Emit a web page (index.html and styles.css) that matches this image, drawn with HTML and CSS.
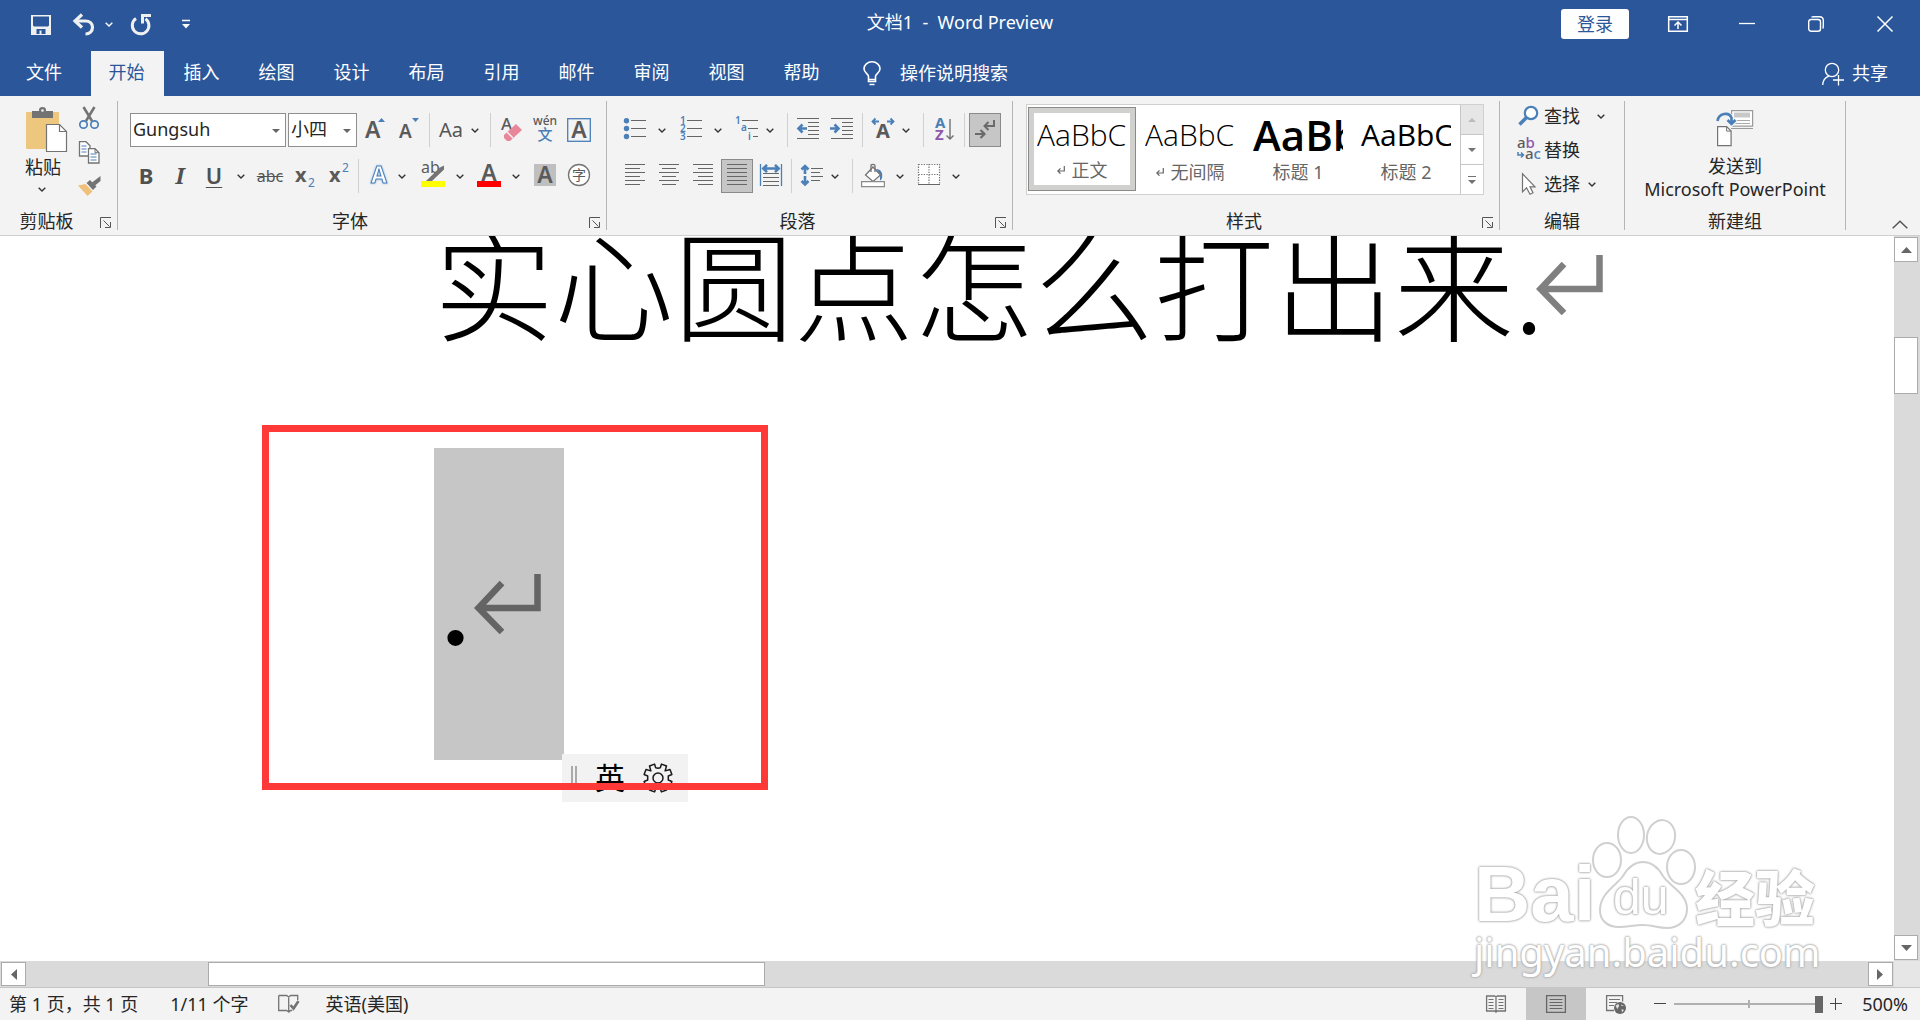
FILE: index.html
```html
<!DOCTYPE html>
<html lang="zh-CN">
<head>
<meta charset="utf-8">
<meta name="viewport" content="width=device-width, initial-scale=1">
<title>文档1 - Word Preview</title>
<link rel="stylesheet" href="styles.css">
</head>
<body>
<svg class="sprites" aria-hidden="true">
  <symbol id="chev" viewBox="0 0 8 5"><path d="M.7 .7 4 4 7.3 .7" fill="none" stroke="currentColor" stroke-width="1.4"/></symbol>
  <symbol id="tri" viewBox="0 0 8 4"><path d="M0 0h8L4 4z" fill="currentColor"/></symbol>
  <symbol id="launch" viewBox="0 0 12 12"><path d="M.5 11V.5H11M3.5 3.5 9.500 9.500M10.500 5v5.500H5" fill="none" stroke="#555"/></symbol>
  <symbol id="ret" viewBox="0 0 68 60"><path d="M63.500 0v34H5M28 9 4.500 34 28 58" fill="none" stroke="currentColor" stroke-width="6.500"/></symbol>
  <symbol id="smallret" viewBox="0 0 8 8"><path d="M7.300 0v5H1M3.500 2.300.8 5l2.700 2.700" fill="none" stroke="currentColor" stroke-width="1.200"/></symbol>
</svg>

<header class="titlebar">
  <div class="quick">
    <button class="q save" aria-label="保存"><svg width="20" height="20"><path d="M0 0h20v20H0z" fill="#f0f0f0"/><path d="M2 1.500h16v9l-1 1H3l-1-1zM5.500 14h9v5h-4v-3.500h-2V19h-3z" fill="#2b579a"/></svg></button>
    <button class="q undo" aria-label="撤销"><svg width="24" height="22"><path d="M3 7h10.500c4 0 7 2.500 7 6.300 0 4-3 6.700-7 6.700" fill="none" stroke="#f0f0f0" stroke-width="3.200"/><path d="M10 .5 3 7l7 6.500" fill="none" stroke="#f0f0f0" stroke-width="3.200"/></svg><svg width="8" height="5"><use href="#chev"/></svg></button>
    <button class="q redo" aria-label="重复"><svg width="22" height="22"><path d="M15.500 4.800A8.300 8.300 0 1 1 6 4.600" fill="none" stroke="#f0f0f0" stroke-width="3"/><path d="M12.500 9.500V1.500H21" fill="none" stroke="#f0f0f0" stroke-width="3"/></svg></button>
    <button class="q" aria-label="自定义快速访问工具栏"><svg width="8" height="9"><path d="M0 .5h8" stroke="#fff" stroke-width="1.500"/><path d="M0 4h8L4 8.500z" fill="#fff"/></svg></button>
  </div>
  <h1 class="doc-title">文档1 &nbsp;-&nbsp; Word Preview</h1>
  <div class="window">
    <button class="login">登录</button>
    <button class="win" aria-label="功能区显示选项"><svg width="20" height="16"><path d="M.7.7h18.600v14.600H.7zM0 3.500h20M10 13V6M6.500 9.500 10 6l3.500 3.500" fill="none" stroke="#fff" stroke-width="1.500"/></svg></button>
    <button class="win" aria-label="最小化"><svg width="16" height="16"><path d="M0 7.500h16" stroke="#fff" stroke-width="1.300"/></svg></button>
    <button class="win" aria-label="还原"><svg width="16" height="16"><rect x=".7" y="3.500" width="11.800" height="11.800" rx="2.500" fill="none" stroke="#fff" stroke-width="1.400"/><path d="M3.500 1.200C4 .8 5 .7 6 .7h5.500c2.500 0 3.800 1.300 3.800 3.800V10c0 1.200-.2 2-.6 2.500" fill="none" stroke="#fff" stroke-width="1.400"/></svg></button>
    <button class="win" aria-label="关闭"><svg width="16" height="16"><path d="M.5.5l15 15M15.500.5l-15 15" stroke="#fff" stroke-width="1.500"/></svg></button>
  </div>
</header>

<nav class="tabs">
  <a class="tab file" href="#">文件</a>
  <a class="tab active" href="#">开始</a>
  <a class="tab" href="#">插入</a>
  <a class="tab" href="#">绘图</a>
  <a class="tab" href="#">设计</a>
  <a class="tab" href="#">布局</a>
  <a class="tab" href="#">引用</a>
  <a class="tab" href="#">邮件</a>
  <a class="tab" href="#">审阅</a>
  <a class="tab" href="#">视图</a>
  <a class="tab" href="#">帮助</a>
  <button class="tellme"><svg width="18" height="25"><path d="M5.500 18.500v-3C5.500 13 1 12 1 7.800a8 7 0 0 1 16 0c0 4.200-4.500 5.200-4.500 7.700v3zM5.500 18.500v2h7v-2M6.500 23.500h5" fill="none" stroke="#fff" stroke-width="1.600"/></svg>操作说明搜索</button>
  <button class="share"><svg width="22" height="24"><circle cx="10" cy="8" r="6.700" fill="none" stroke="#fff" stroke-width="1.300"/><path d="M.7 23C1 18 3.500 15.300 7 14.200M16.500 13v10.500M11 18h11" fill="none" stroke="#fff" stroke-width="1.300"/></svg>共享</button>
</nav>

<section class="ribbon">
  <div class="group g-clip">
    <div class="body clip">
      <button class="paste">
        <svg width="42" height="46"><rect y="5" width="33" height="37" rx="1" fill="#eec77e"/><path d="M6 4h7V3a3.500 3 0 0 1 7 0v1h7v7H6z" fill="#737373"/><circle cx="16.500" cy="3.500" r="1.300" fill="#f3f3f3"/><path d="M20.500 17.500h13l7 7v20h-20z" fill="#fff" stroke="#737373" stroke-width="1.200"/><path d="M33.500 17.500v7h7" fill="none" stroke="#737373" stroke-width="1.200"/></svg>
        <span>粘贴</span>
        <svg class="c" width="8" height="5"><use href="#chev"/></svg>
      </button>
      <div class="clip-side">
        <button aria-label="剪切"><svg width="22" height="22"><path d="M5.500 0 14 14M16.500 0 8 14" stroke="#737373" stroke-width="2.500"/><circle cx="5.500" cy="17.500" r="3.700" fill="none" stroke="#4a7fb8" stroke-width="1.700"/><circle cx="16.500" cy="17.500" r="3.700" fill="none" stroke="#4a7fb8" stroke-width="1.700"/></svg></button>
        <button aria-label="复制"><svg width="22" height="23"><path d="M1.500.7h6.500l4 4V15H1.500z" fill="#fff" stroke="#737373" stroke-width="1.300"/><path d="M3.500 5h5M3.500 8h5M3.500 11h5" stroke="#4a7fb8"/><path d="M10.500 7.700H17l4 4V22H10.500z" fill="#fff" stroke="#737373" stroke-width="1.300"/><path d="M17 7.700v4h4" fill="none" stroke="#737373"/><path d="M12.500 13h6M12.500 16h6M12.500 19h6" stroke="#4a7fb8"/></svg></button>
        <button aria-label="格式刷"><svg width="23" height="20"><path d="M0 9.500 7.500 8l7 7.500-5 4.500z" fill="#eec07a"/><path d="M8.500 7 12 4l6.500 6.500-3.500 3.500z" fill="#737373"/><path d="M14 6.500 22.500 0v5L17 9.500z" fill="#737373"/></svg></button>
      </div>
    </div>
    <div class="foot"><span>剪贴板</span><button aria-label="剪贴板设置"><svg width="12" height="12"><use href="#launch"/></svg></button></div>
  </div>
  <i class="divider"></i>

  <div class="group g-font">
    <div class="body">
      <div class="row">
        <span class="combo wide"><select aria-label="字体"><option>Gungsuh</option></select><svg width="8" height="4"><use href="#tri"/></svg></span>
        <span class="combo"><select aria-label="字号"><option>小四</option></select><svg width="8" height="4"><use href="#tri"/></svg></span>
        <button class="t" aria-label="增大字号"><svg width="24" height="24"><text x="2" y="20" class="l24">A</text><path d="M15 4h7l-3.500-4z" fill="#4a7fb8"/></svg></button>
        <button class="t" aria-label="减小字号"><svg width="24" height="24"><text x="2" y="20" class="l20">A</text><path d="M15 0h7l-3.500 4z" fill="#4a7fb8"/></svg></button>
        <i class="sep"></i>
        <button class="t tight" aria-label="更改大小写"><span class="aa">Aa</span><svg class="c" width="8" height="5"><use href="#chev"/></svg></button>
        <i class="sep"></i>
        <button class="t" aria-label="清除格式"><svg width="24" height="24"><text x="2" y="12" class="l18">A</text><path d="M5 17 17 6l6 6-12 11H8l-3-3z" fill="#e8879a"/><path d="m8 14 6 6" stroke="#f3f3f3" stroke-width="1.500"/></svg></button>
        <button class="t" aria-label="拼音指南"><svg width="24" height="24"><text x="12" y="7" text-anchor="middle" class="l12">wén</text><text x="12" y="22" text-anchor="middle" class="l14">文</text></svg></button>
        <button class="t" aria-label="字符边框"><svg width="24" height="24"><rect x=".7" y=".7" width="22.600" height="22.600" fill="none" stroke="#4a7fb8" stroke-width="1.300"/><text x="12" y="20" text-anchor="middle" class="l22">A</text></svg></button>
      </div>
      <div class="row">
        <button class="t ch b" aria-label="加粗">B</button>
        <button class="t ch i" aria-label="倾斜">I</button>
        <button class="t split" aria-label="下划线"><span class="ch u">U</span><svg class="c" width="8" height="5"><use href="#chev"/></svg></button>
        <button class="t" aria-label="删除线"><s class="strike">abc</s></button>
        <button class="t" aria-label="下标"><svg width="24" height="24"><text x="3" y="18" class="x">x</text><text x="16" y="23" class="n">2</text></svg></button>
        <button class="t" aria-label="上标"><svg width="24" height="24"><text x="3" y="18" class="x">x</text><text x="16" y="8" class="n">2</text></svg></button>
        <i class="sep"></i>
        <button class="t tight" aria-label="文本效果"><svg width="24" height="24"><text x="12" y="19" text-anchor="middle" class="outline">A</text></svg><svg class="c" width="8" height="5"><use href="#chev"/></svg></button>
        <button class="t split" aria-label="突出显示"><svg width="24" height="24"><text x="0" y="9" class="l16">ab</text><path d="M5 17 19 3.500 23 1.500v4L11 17z" fill="#737373"/><path d="M0 17h24v6H0z" fill="#ff0"/></svg><svg class="c" width="8" height="5"><use href="#chev"/></svg></button>
        <button class="t split" aria-label="字体颜色"><svg width="24" height="24"><text x="12" y="17" text-anchor="middle" class="l22">A</text><path d="M0 17h24v6H0z" fill="#f00"/></svg><svg class="c" width="8" height="5"><use href="#chev"/></svg></button>
        <button class="t" aria-label="字符底纹"><svg width="24" height="24"><path d="M1 0h22v22H1z" fill="#bfbfbf"/><text x="12" y="19" text-anchor="middle" class="l22">A</text></svg></button>
        <button class="t" aria-label="带圈字符"><svg width="24" height="24"><circle cx="12" cy="11" r="10.500" fill="#fff" stroke="#737373" stroke-width="1.300"/><text x="12" y="16" text-anchor="middle" class="zi">字</text></svg></button>
      </div>
    </div>
    <div class="foot"><span>字体</span><button aria-label="字体设置"><svg width="12" height="12"><use href="#launch"/></svg></button></div>
  </div>
  <i class="divider"></i>

  <div class="group g-para">
    <div class="body">
      <div class="row">
        <button class="t split" aria-label="项目符号"><svg width="24" height="24"><g fill="#4a7fb8"><circle cx="3.500" cy="2.700" r="2.700"/><circle cx="3.500" cy="10.500" r="2.700"/><circle cx="3.500" cy="18.500" r="2.700"/></g><path class="ln" d="M8 2.500h15M8 10.500h15M8 18.500h15"/></svg><svg class="c" width="8" height="5"><use href="#chev"/></svg></button>
        <button class="t split" aria-label="编号"><svg width="24" height="24"><text x="1" y="6" class="n9">1</text><text x="1" y="14" class="n9">2</text><text x="1" y="22" class="n9">3</text><path class="ln" d="M8 2.500h15M8 10.500h15M8 18.500h15"/></svg><svg class="c" width="8" height="5"><use href="#chev"/></svg></button>
        <button class="t tight" aria-label="多级列表"><svg width="24" height="24"><text x="0" y="6" class="n9">1</text><text x="6" y="13" class="n9">a</text><text x="13" y="22" class="n9">i</text><path class="ln" d="M7 2.500h16M13 10.500h10M18 18.500h5"/></svg><svg class="c" width="8" height="5"><use href="#chev"/></svg></button>
        <i class="sep"></i>
        <button class="t" aria-label="减少缩进量"><svg width="24" height="24"><path class="ln" d="M1 .5h22M12 4.500h11M12 8.500h11M12 12.500h11M12 16.500h11M1 20.500h22"/><path d="M11 10.500H3M6.500 6.500l-4 4 4 4" class="ar"/></svg></button>
        <button class="t" aria-label="增加缩进量"><svg width="24" height="24"><path class="ln" d="M1 .5h22M12 4.500h11M12 8.500h11M12 12.500h11M12 16.500h11M1 20.500h22"/><path d="M0 10.500h8M4.500 6.500l4 4-4 4" class="ar"/></svg></button>
        <i class="sep"></i>
        <button class="t tight" aria-label="中文版式"><svg width="24" height="24"><text x="12" y="20" text-anchor="middle" class="l18 w">A</text><path d="M8 3.500H2M4.500.5l-3 3 3 3M16 3.500h6M19.500.5l3 3-3 3" fill="none" stroke="#4a7fb8" stroke-width="1.800"/></svg><svg class="c" width="8" height="5"><use href="#chev"/></svg></button>
        <i class="sep"></i>
        <button class="t" aria-label="排序"><svg width="24" height="24"><text x="3" y="10" class="az">A</text><text x="3" y="22" class="az z">Z</text><path d="M18 1v20M14.500 17.500 18 21l3.500-3.500" fill="none" stroke="#737373" stroke-width="1.400"/></svg></button>
        <i class="sep"></i>
        <button class="t on" aria-label="显示编辑标记" aria-pressed="true"><svg width="24" height="24"><path d="M21 2v6h-9M15.500 4 11.500 8l4 4" fill="none" stroke="#6a6a6a" stroke-width="2"/><path d="M2 16h9M7.500 12l4 4-4 4" fill="none" stroke="#6a6a6a" stroke-width="2.200"/></svg></button>
      </div>
      <div class="row">
        <button class="t" aria-label="左对齐"><svg width="24" height="24"><path class="ln" d="M2 .5h20M2 4.500h15M2 8.500h20M2 12.500h15M2 16.500h20M2 20.500h15"/></svg></button>
        <button class="t" aria-label="居中"><svg width="24" height="24"><path class="ln" d="M2 .5h20M5 4.500h14M2 8.500h20M5 12.500h14M2 16.500h20M5 20.500h14"/></svg></button>
        <button class="t" aria-label="右对齐"><svg width="24" height="24"><path class="ln" d="M2 .5h20M7 4.500h15M2 8.500h20M7 12.500h15M2 16.500h20M7 20.500h15"/></svg></button>
        <button class="t on" aria-label="两端对齐" aria-pressed="true"><svg width="24" height="24"><path class="ln" d="M2 .5h20M2 4.500h20M2 8.500h20M2 12.500h20M2 16.500h20M2 20.500h20"/></svg></button>
        <button class="t" aria-label="分散对齐"><svg width="24" height="24"><path d="M1.500 0v22M22.500 0v22" stroke="#4a7fb8" stroke-width="1.300"/><path d="M5 4.500h14M8 .8 4.300 4.500 8 8.200M16 .8l3.700 3.700L16 8.200" class="ar"/><path class="ln" d="M4 9.500h16M4 13.500h16M4 17.500h16M4 21.500h16"/></svg></button>
        <i class="sep"></i>
        <button class="t tight" aria-label="行距"><svg width="24" height="24"><path d="M5 2v18M1.500 5.500 5 2l3.500 3.500M1.500 17 5 20.500 8.500 17" class="ar"/><path d="M3 11h4" stroke="#f3f3f3" stroke-width="2"/><path class="ln" d="M11 4.500h12M11 8.500h9M11 12.500h12M11 16.500h9"/></svg><svg class="c" width="8" height="5"><use href="#chev"/></svg></button>
        <i class="sep"></i>
        <button class="t split" aria-label="底纹"><svg width="24" height="24"><path d="M15 5c5 0 7 4 6 9-.3 1.500-1.500 2.500-2 2.500V10z" fill="#4a7fb8"/><path d="m12 3 7.500 8-7.500 6.500L4.500 11z" fill="#fff" stroke="#737373" stroke-width="1.300"/><path d="M10 8V1.500C10 0 14 0 14 1.500V8" fill="none" stroke="#737373" stroke-width="1.300"/><path d="M.6 17.600h22.800v5H.6z" fill="#fff" stroke="#8a8a8a" stroke-width="1.200"/></svg><svg class="c" width="8" height="5"><use href="#chev"/></svg></button>
        <button class="t split" aria-label="边框"><svg width="24" height="24"><path d="M1 0h22v20H1z" fill="#fff"/><path d="M1.500.5h21M1.500 10.500h21M1.500 0v20M12 0v20M22.500 0v20" stroke="#737373" stroke-width="1.200" stroke-dasharray="1.300 1.300"/><path class="ln" d="M1 20.500h22"/></svg><svg class="c" width="8" height="5"><use href="#chev"/></svg></button>
      </div>
    </div>
    <div class="foot"><span>段落</span><button aria-label="段落设置"><svg width="12" height="12"><use href="#launch"/></svg></button></div>
  </div>
  <i class="divider"></i>

  <div class="group g-style">
    <div class="body styles">
      <div class="gallery">
        <button class="style sel"><span class="sample light">AaBbC</span><span class="name"><svg width="8" height="8"><use href="#smallret"/></svg>正文</span></button>
        <button class="style"><span class="sample light">AaBbC</span><span class="name"><svg width="8" height="8"><use href="#smallret"/></svg>无间隔</span></button>
        <button class="style"><span class="sample big">AaBb</span><span class="name">标题 1</span></button>
        <button class="style"><span class="sample">AaBbC</span><span class="name">标题 2</span></button>
        <div class="scrollers">
          <button class="off" aria-label="上一行"><svg width="8" height="4"><path d="M0 4h8L4 0z" fill="#bbb"/></svg></button>
          <button aria-label="下一行"><svg width="8" height="4"><use href="#tri"/></svg></button>
          <button aria-label="其他样式"><svg width="8" height="8"><path d="M0 .5h8" stroke="#737373"/><path d="M0 4h8L4 8z" fill="#737373"/></svg></button>
        </div>
      </div>
    </div>
    <div class="foot"><span>样式</span><button aria-label="样式设置"><svg width="12" height="12"><use href="#launch"/></svg></button></div>
  </div>
  <i class="divider"></i>

  <div class="group g-edit">
    <div class="body edit">
      <button class="cmd"><svg width="24" height="22"><circle cx="14" cy="8" r="6.200" fill="#fff" stroke="#4a7fb8" stroke-width="2.200"/><path d="m9.500 12.500-7 7" stroke="#4a7fb8" stroke-width="3.500"/></svg>查找<svg class="c far" width="8" height="5"><use href="#chev"/></svg></button>
      <button class="cmd"><svg width="24" height="22"><text x="0" y="9" class="rp">a<tspan fill="#8e57ab">b</tspan></text><text x="8" y="20" class="rp">a<tspan fill="#4a7fb8">c</tspan></text><path d="M1 13v3h5M4 13.500l2.500 2.500L4 18.500" fill="none" stroke="#4a7fb8" stroke-width="1.500"/></svg>替换</button>
      <button class="cmd"><svg width="24" height="22"><path d="M5.500.8v18l4-4 3.500 6.500 3-1.500-3-6h5z" fill="#fff" stroke="#737373" stroke-width="1.200"/></svg>选择<svg class="c" width="8" height="5"><use href="#chev"/></svg></button>
    </div>
    <div class="foot"><span>编辑</span></div>
  </div>
  <i class="divider"></i>

  <div class="group g-new">
    <div class="body">
      <button class="send"><svg width="38" height="38"><path d="M15.600 1.600h21v15.500h-21z" fill="#fff" stroke="#9a9a9a" stroke-width="1.200"/><path d="M18 3.500h16v5H18z" fill="#c8c8c8"/><path d="M18 11.500h16M18 14.500h16" stroke="#aaa"/><path d="M15 19.500h22" stroke="#9a9a9a"/><path d="M1.500 13C2.500 6 11 1.500 15.500 9v6M11 10.500l4.500 4.500 4.500-4.500" fill="none" stroke="#f3f3f3" stroke-width="5"/><path d="M1.500 12C2.500 4.500 13 2 15.500 9v6M11.500 11l4 4 4-4" fill="none" stroke="#4a7fb8" stroke-width="2.600"/><path d="M1.600 17.600h9l4.500 4.500v14.500H1.600z" fill="#fff" stroke="#737373" stroke-width="1.200"/><path d="M10.600 17.600v4.500h4.500" fill="none" stroke="#737373"/></svg><span>发送到</span><span>Microsoft PowerPoint</span></button>
    </div>
    <div class="foot"><span>新建组</span></div>
  </div>
  <i class="divider"></i>
  <button class="collapse" aria-label="折叠功能区"><svg width="16" height="9"><path d="m.7 8.300 7.300-7 7.300 7" fill="none" stroke="#555" stroke-width="1.500"/></svg></button>
</section>

<main class="workspace">
  <article class="page">
    <p class="line">实心圆点怎么打出来.<svg class="mark" width="68" height="60"><use href="#ret"/></svg></p>
    <p class="selected"><span class="dot">•</span><svg class="mark" width="68" height="60"><use href="#ret"/></svg></p>
    <div class="ime"><i class="grip"></i><span>英</span><svg width="30" height="30" viewBox="-15 -15 30 30"><g fill="none" stroke="#1a1a1a" stroke-width="1.500"><circle r="5"/><path d="M-3.500-13.900-2.300-10.300 0-9.800 2.300-10.300 3.500-13.900 8.500-12 7.100-7.100 12-8.500 13.900-3.500 10.300-2 10.300 2 13.900 3.500 12 8.500 7.100 7.100 8.500 12 3.500 13.900 2 10.300-2 10.300-3.500 13.900-8.500 12-7.100 7.100-12 8.500-13.900 3.500-10.300 2-10.300-2-13.900-3.500-12-8.500-7.100-7.100-8.500-12z" stroke-linejoin="round"/></g></svg></div>
    <div class="highlight"></div>
  </article>
  <div class="vscroll">
    <button aria-label="向上滚动"><svg width="11" height="6"><path d="M0 6h11L5.500 0z" fill="#666"/></svg></button>
    <i class="before"></i><i class="thumb"></i><i class="after"></i>
    <button aria-label="向下滚动"><svg width="11" height="6"><path d="M0 0h11L5.500 6z" fill="#666"/></svg></button>
  </div>
</main>

<div class="hscroll">
  <button aria-label="向左滚动"><svg width="6" height="11"><path d="M6 0v11L0 5.500z" fill="#666"/></svg></button>
  <i class="before"></i><i class="thumb"></i><i class="after"></i>
  <button aria-label="向右滚动"><svg width="6" height="11"><path d="M0 0v11l6-5.500z" fill="#666"/></svg></button>
  <i class="corner"></i>
</div>

<footer class="status">
  <span class="pages">第 1 页，共 1 页</span>
  <span class="words">1/11 个字</span>
  <svg class="proof" width="22" height="20"><path d="M.7 1.500h8l2 1.500 2-1.500h7V6M.7 1.500v15h8l2 1.500V3M10.700 18l2-1.500h1.500" fill="none" stroke="#737373" stroke-width="1.300"/><path d="m12.500 11 3 3.500L20.500 7" fill="none" stroke="#737373" stroke-width="2.600"/></svg>
  <span>英语(美国)</span>
  <div class="views">
    <button aria-label="阅读视图"><svg width="20" height="18"><path d="M.6 1h8l1.400 1 1.400-1h8v15h-8L10 17l-1.400-1h-8zM10 2v16" fill="none" stroke="#737373" stroke-width="1.300"/><path d="M2.500 4.500h5M2.500 7.500h5M2.500 10.500h5M2.500 13.500h5M12.500 4.500h5M12.500 7.500h5M12.500 10.500h5M12.500 13.500h5" stroke="#737373"/></svg></button>
    <button class="cur" aria-label="页面视图"><svg width="20" height="18"><path d="M.6.6h18.800v16.800H.6z" fill="none" stroke="#666" stroke-width="1.300"/><path d="M3.500 4.500h13M3.500 7.500h13M3.500 10.500h13M3.500 13.500h13" stroke="#666"/></svg></button>
    <button aria-label="Web 版式视图"><svg width="20" height="19"><path d="M8 15.500H.6V.6h16v6" fill="none" stroke="#737373" stroke-width="1.300"/><path d="M3 4.500h11M3 7.500h8M3 10.500h5" stroke="#737373"/><circle cx="14" cy="13" r="6" fill="#666"/><path d="M9.500 11c2-2.500 4-2 3.500 0s-2 2-1 4M15 9.500c0 2 2 1.500 4 2M15.500 14l2.500 1-2 2.500z" fill="#ddd"/></svg></button>
  </div>
  <button class="zoom" aria-label="缩小"><svg width="12" height="12"><path d="M0 5.500h12" stroke="#444"/></svg></button>
  <input class="slider" type="range" min="10" max="500" value="500" aria-label="显示比例">
  <button class="zoom" aria-label="放大"><svg width="12" height="12"><path d="M0 5.500h12M5.500 0v12" stroke="#444"/></svg></button>
  <span class="pct">500%</span>
</footer>

<div class="watermark">
  <div class="wm-top">
    <span class="bai">Bai</span>
    <span class="paw"><svg width="104" height="116" viewBox="0 0 104 116"><g fill="#fff" stroke="#d0d0d0" stroke-width="2"><ellipse cx="16" cy="46" rx="14" ry="17"/><ellipse cx="40" cy="21" rx="13" ry="18"/><ellipse cx="70" cy="23" rx="14" ry="17" transform="rotate(12 70 23)"/><ellipse cx="90" cy="53" rx="14" ry="17"/><path d="M52 48c-10 0-16 7-20 14-6 9-23 17-23 34 0 11 8 17 19 17 9 0 15-2 24-2s15 3 24 3c11 0 20-7 20-19 0-16-17-22-24-33-4-7-10-14-20-14z"/></g></svg><span class="du">du</span></span>
    <span class="jy">经验</span>
  </div>
  <div class="url">jingyan.baidu.com</div>
</div>
</body>
</html>
```
FILE: styles.css
```css
* { box-sizing: border-box; }

body {
  margin: 0;
  min-height: 100vh;
  display: flex;
  flex-direction: column;
  position: relative;
  overflow: hidden;
  font: 18px/24px "Noto Sans", "Noto Sans CJK SC", sans-serif;
  color: #262626;
  background: #fff;
}

button, select, input { font: inherit; color: inherit; margin: 0; }
button { border: 0; padding: 0; background: none; white-space: nowrap; }
a { color: inherit; text-decoration: none; }
svg { display: block; flex: none; overflow: visible; }
.sprites { position: absolute; width: 0; height: 0; }

/* Title bar */
.titlebar {
  height: 51px;
  display: grid;
  grid-template-columns: 1fr auto 1fr;
  padding-bottom: 4px;
  color: #fff;
  background: #2b579a;
}
.doc-title { margin: 0; font-size: 18px; font-weight: 400; line-height: 45px; }
.quick { display: flex; align-items: center; padding: 2px 0 0 31px; }
.q { display: flex; align-items: center; gap: 9px; }
.save { margin-right: 21px; }
.undo { margin-right: 17px; }
.redo { margin-right: 30px; }
.window { display: flex; justify-content: flex-end; align-items: center; padding-right: 1px; }
.login {
  width: 68px; height: 30px;
  margin-right: 14px;
  border-radius: 3px;
  color: #2b579a;
  background: #fff;
}
.win { width: 69px; height: 46px; display: grid; place-items: center; }

/* Tabs */
.tabs { height: 45px; display: flex; color: #fff; background: #2b579a; line-height: 43px; }
.tab { width: 73px; margin: 0 1px; padding-right: 2px; text-align: center; }
.tab.file { width: 88px; }
.tab.active { color: #2b579a; background: #f3f3f3; }
.tellme, .share { display: flex; align-items: center; line-height: 43px; }
.tellme { margin-left: 23px; gap: 19px; }
.share { margin-left: auto; margin-right: 32px; gap: 8px; }

/* Ribbon */
.ribbon {
  height: 140px;
  display: flex;
  background: #f3f3f3;
  border-bottom: 1px solid #cfcfcf;
}
.group { display: flex; flex-direction: column; padding-bottom: 2px; }
.g-clip { width: 117px; }
.g-font { width: 488px; }
.g-para { width: 405px; }
.g-style { width: 486px; }
.g-edit { width: 124px; }
.g-new { width: 220px; }
.divider { width: 1px; margin: 5px 0; background: #b5b5b5; }
.body { flex: 1; padding: 17px 0 0 11px; display: flex; flex-direction: column; gap: 12px; }
.foot { display: flex; align-items: center; height: 24px; }
.foot span { flex: 1; text-align: center; }
.foot button { width: 24px; padding: 4px 5px 0 7px; }
.row { display: flex; height: 34px; }
.sep { width: 1px; margin: 0 3px; background: #d0d0d0; }
.c { color: #333; }

.t { width: 34px; display: flex; align-items: center; justify-content: center; color: #555; }
.t.split { width: 56px; justify-content: flex-start; padding-left: 5px; gap: 11px; }
.t.tight { width: 54px; justify-content: flex-start; padding-left: 5px; gap: 7px; }
.t.on { width: 32px; margin: 0 1px; background: #c6c6c6; border: 1px solid #8a8a8a; }
.ln { fill: none; stroke: #666; stroke-width: 1; }
.ar { fill: none; stroke: #4a7fb8; stroke-width: 2.6; }

.clip { flex-direction: row; gap: 0; padding: 11px 0 0 22px; }
.paste { width: 50px; display: flex; flex-direction: column; align-items: center; }
.paste span { margin: 2px 0 8px; padding-right: 8px; }
.paste .c { margin-right: 10px; }
.clip-side { display: flex; flex-direction: column; gap: 12px; padding-left: 6px; }

.combo { position: relative; width: 69px; }
.combo.wide { width: 156px; margin: 0 2px 0 0; }
.combo + .combo { margin-right: 1px; }
.g-font .row:first-child { padding-left: 1px; }
.combo select {
  width: 100%; height: 34px;
  appearance: none;
  border: 1px solid #8f8f8f;
  border-radius: 0;
  padding: 0 2px 2px;
  background: #fff;
}
.combo svg { position: absolute; right: 6px; top: 16px; color: #666; }

text { font-family: "Noto Sans", "Noto Sans CJK SC", sans-serif; fill: #5a5a5a; }
.l24, .l22 { font-size: 23px; font-weight: 600; }
.l20 { font-size: 19px; font-weight: 600; }
.l18 { font-size: 17px; font-weight: 500; }
.l18.w { font-size: 20px; font-weight: 700; }
.l16 { font-size: 16px; }
.l12 { font-size: 12px; font-weight: 500; }
.l14 { font-size: 15px; font-weight: 500; fill: #4a7fb8; }
.zi { font-size: 14px; }
.x { font-size: 20px; font-weight: 700; }
.n { font-size: 12px; fill: #4a7fb8; }
.n9 { font-size: 10px; font-weight: 600; fill: #4a7fb8; }
.az { font-size: 15px; font-weight: 700; fill: #4a7fb8; }
.az.z { fill: #8e57ab; }
.rp { font-size: 15px; font-weight: 500; }
.outline { font-size: 23px; font-weight: 700; fill: #fff; stroke: #4a7fb8; stroke-width: 1; filter: drop-shadow(0 0 1px #8fbbe6); }
.aa { width: 26px; font-size: 20px; }
.ch { font-size: 22px; font-weight: 700; color: #505050; line-height: 30px; padding-bottom: 2px; }
.i { font-family: "Noto Serif", "Liberation Serif", serif; font-style: italic; }
.u { width: 24px; text-align: center; font-weight: 600; text-decoration: underline; text-underline-offset: 3px; text-decoration-thickness: 1px; }
.strike { font-size: 16px; }

/* Style gallery */
.styles { padding: 8px 0 0 13px; }
.gallery { width: 458px; height: 91px; display: flex; background: #fff; border: 1px solid #d0d0d0; padding-left: 1px; }
.style {
  width: 108px; height: 84px;
  margin-top: 2px;
  padding: 6px 9px 0;
  display: flex; flex-direction: column; align-items: center;
}
.style.sel { padding: 0 3px; border: 6px solid #d0d0ce; outline: 1px solid #8a8a8a; outline-offset: -1px; }
.sample {
  width: 90px; height: 44px;
  overflow: hidden;
  text-align: left;
  color: #000;
  font: 400 30px/44px "Open Sans", "Noto Sans", sans-serif;
}
.sample.light { font-weight: 300; }
.sample.big { font-weight: 600; font-size: 42px; }
.name { display: flex; align-items: center; gap: 7px; line-height: 30px; color: #666; }
.scrollers { margin-left: auto; width: 23px; display: flex; flex-direction: column; border-left: 1px solid #c6c6c6; color: #737373; }
.scrollers button { flex: 1; display: grid; place-items: center; }
.scrollers button + button { border-top: 1px solid #c6c6c6; }
.scrollers .off { background: #e6e6e6; }

/* Editing and custom groups */
.edit { padding: 3px 0 0 17px; gap: 0; align-items: flex-start; }
.cmd { height: 34px; display: flex; align-items: center; gap: 3px; }
.cmd .c { margin-left: 5px; }
.cmd .far { margin-left: 14px; }
.g-new .body { padding: 13px 0 0; }
.send { display: flex; flex-direction: column; align-items: center; line-height: 23px; }
.send svg { margin-bottom: 8px; }
.collapse { margin: auto 12px 6px auto; }

/* Document */
.workspace { flex: 1; min-height: 0; display: flex; }
.page { flex: 1; position: relative; overflow: hidden; padding-left: 434px; color: #000; }
.line {
  margin: -15px 0 107px;
  display: flex;
  height: 120px;
  font: 300 120px/120px "Noto Sans CJK SC", sans-serif;
  white-space: nowrap;
}
.line .mark { margin: 34px 0 0 -8px; color: #808080; }
.selected {
  margin: 0;
  width: 130px; height: 312px;
  display: flex;
  align-items: center;
  gap: 11px;
  padding: 0 0 0 11px;
  background: #c6c6c6;
}
.selected .mark { color: #646464; }
.dot { width: 18px; padding-top: 68px; font: 60px/60px "Liberation Sans", sans-serif; }
.ime {
  position: absolute; left: 562px; top: 518px;
  width: 126px; height: 48px;
  display: flex; align-items: center;
  padding-left: 9px;
  background: #f2f2f2;
}
.grip { width: 6px; height: 24px; border: 2px solid #aaa; border-width: 0 2px; margin-right: 18px; }
.ime span { width: 28px; margin-right: 20px; font-size: 30px; line-height: 48px; }
.highlight { position: absolute; left: 262px; top: 189px; width: 506px; height: 365px; border: 7px solid #ff3838; }

/* Scroll bars */
.vscroll { width: 26px; padding: 1px 2px 1px 0; display: flex; flex-direction: column; background: #dadada; }
.hscroll { height: 26px; padding: 1px 0 1px 1px; display: flex; background: #dadada; }
.vscroll button, .hscroll button { width: 25px; height: 25px; display: grid; place-items: center; background: #fff; border: 1px solid #ababab; }
.hscroll button { height: 24px; }
.vscroll button { width: 24px; }
.thumb { background: #fff; border: 1px solid #ababab; }
.vscroll .before { flex: 75; }
.vscroll .thumb { flex: 56; }
.vscroll .after { flex: 543; }
.hscroll .before { flex: 182; }
.hscroll .thumb { flex: 556; }
.hscroll .after { flex: 1104; }
.corner { width: 26px; margin: -1px 0 -1px 1px; background: #e6e6e6; }

/* Status bar */
.status { height: 33px; display: flex; align-items: center; padding-left: 9px; background: #f3f3f3; border-top: 1px solid #c6c6c6; }
.pages { margin-right: 32px; }
.words { margin-right: 29px; }
.proof { margin-right: 26px; }
.views { margin-left: auto; display: flex; height: 32px; margin-right: 8px; }
.views button { width: 60px; display: grid; place-items: center; }
.views .cur { background: #c6c6c6; }
.slider {
  appearance: none;
  width: 149px; height: 17px;
  margin: 0 7px 0 8px;
  background: linear-gradient(#b0b0b0, #b0b0b0) 74px 50% / 2px 8px no-repeat, linear-gradient(#b0b0b0, #b0b0b0) 0 50% / 100% 2px no-repeat;
}
.slider::-webkit-slider-thumb { appearance: none; width: 8px; height: 17px; background: #666; }
.slider::-moz-range-thumb { width: 8px; height: 17px; border: 0; border-radius: 0; background: #666; }
.pct { width: 58px; margin: 0 12px 0 8px; text-align: right; }

/* Watermark */
.watermark {
  position: absolute; right: 103px; bottom: 46px;
  width: 343px;
  color: #fff;
  text-shadow: 0 0 2px #aaa, 0 0 2px #aaa, 0 0 3px #bbb;
  pointer-events: none;
}
.wm-top { display: flex; align-items: flex-end; height: 116px; }
.bai { width: 117px; font: 700 78px/72px "Liberation Sans", sans-serif; }
.paw { position: relative; width: 104px; height: 116px; }
.du { position: absolute; left: 22px; top: 58px; font: 400 50px/50px "Liberation Sans", sans-serif; }
.jy { font: 900 60px/70px "Noto Sans CJK SC", sans-serif; }
.url { font-size: 40px; line-height: 44px; }
```
